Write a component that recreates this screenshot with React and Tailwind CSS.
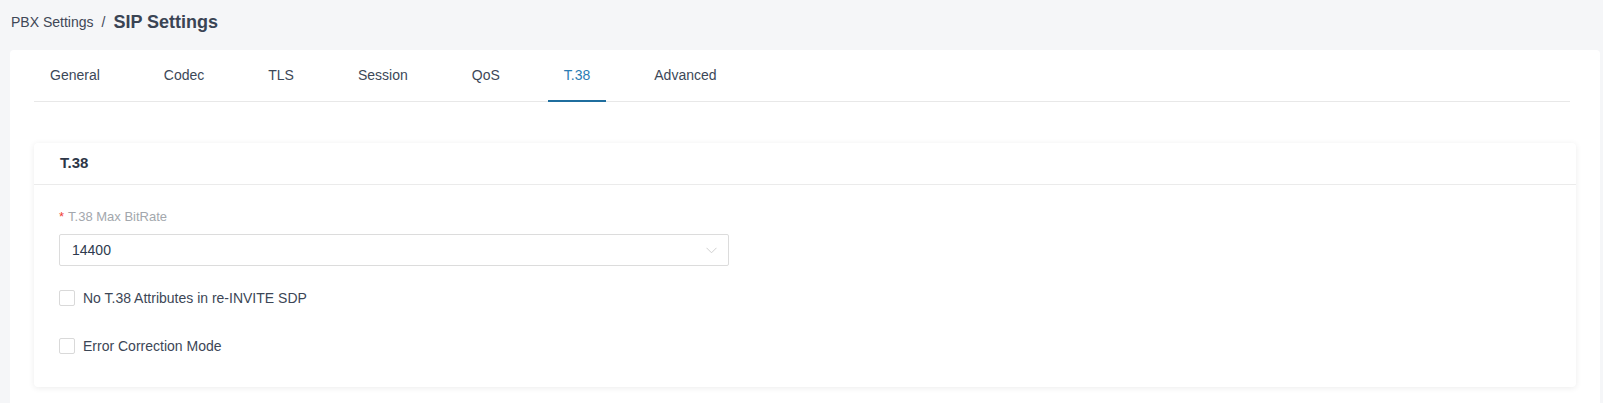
const tabs = ["General", "Codec", "TLS", "Session", "QoS", "T.38", "Advanced"];

const Checkbox = ({ label }) => (
  <label className="flex items-center h-[20px] cursor-pointer">
    <span className="w-[16px] h-[16px] border border-[#d9d9d9] rounded-[2px] bg-white shrink-0" />
    <span className="ml-[8px] text-[14px] text-[#3c4656]">{label}</span>
  </label>
);

const App = () => {
  const active = "T.38";

  return (
    <div className="min-h-screen bg-[#f5f6f8] flex flex-col font-['Liberation_Sans',Arial,sans-serif]">
      {/* Breadcrumb */}
      <div className="h-[50px] pb-[6px] pl-[11px] flex items-center">
        <span className="text-[14px] text-[#3f4756]">PBX Settings</span>
        <span className="mx-[8px] text-[14px] text-[#3f4756]">/</span>
        <span className="text-[18px] font-bold text-[#3a4454]">SIP Settings</span>
      </div>

      {/* Panel */}
      <div className="flex-1 ml-[10px] mr-[3px] bg-white rounded-t-[4px] px-[24px]">
        <ul className="flex mr-[6px] border-b border-[#e8e8e8] list-none">
          {tabs.map((tab) => (
            <li
              key={tab}
              className={`relative h-[51px] px-[16px] mr-[32px] flex items-center text-[14px] cursor-pointer ${
                tab === active ? "text-[#2b7cb3]" : "text-[#3c4858]"
              }`}
            >
              {tab}
              {tab === active && (
                <span className="absolute left-0 right-0 bottom-[-1px] h-[2px] bg-[#1f6e9e]" />
              )}
            </li>
          ))}
        </ul>

        {/* T.38 card */}
        <div className="mt-[41px] bg-white rounded-[4px] shadow-[0_1px_6px_rgba(0,0,0,0.08)]">
          <div className="h-[42px] px-[26px] flex items-center border-b border-[#ebebeb]">
            <h2 className="text-[15px] font-bold text-[#2d3748]">T.38</h2>
          </div>
          <div className="px-[25px] pt-[22px] pb-[31px]">
            <div className="h-[20px] flex items-center text-[13px]">
              <span className="text-[#f04134] mr-[4px]">*</span>
              <span className="text-[#a3a7ad]">T.38 Max BitRate</span>
            </div>
            <div className="mt-[7px] w-[670px] h-[32px] border border-[#dcdcdc] rounded-[2px] flex items-center justify-between pl-[12px] pr-[11px]">
              <span className="text-[14px] text-[#2d3a4e]">14400</span>
              <svg width="11" height="7" viewBox="0 0 11 7" fill="none">
                <path d="M0.5 0.8L5.5 5.8L10.5 0.8" stroke="#cfcfcf" strokeWidth="1" />
              </svg>
            </div>
            <div className="mt-[22px]">
              <Checkbox label="No T.38 Attributes in re-INVITE SDP" />
            </div>
            <div className="mt-[28px]">
              <Checkbox label="Error Correction Mode" />
            </div>
          </div>
        </div>
      </div>
    </div>
  );
};

export default App;
